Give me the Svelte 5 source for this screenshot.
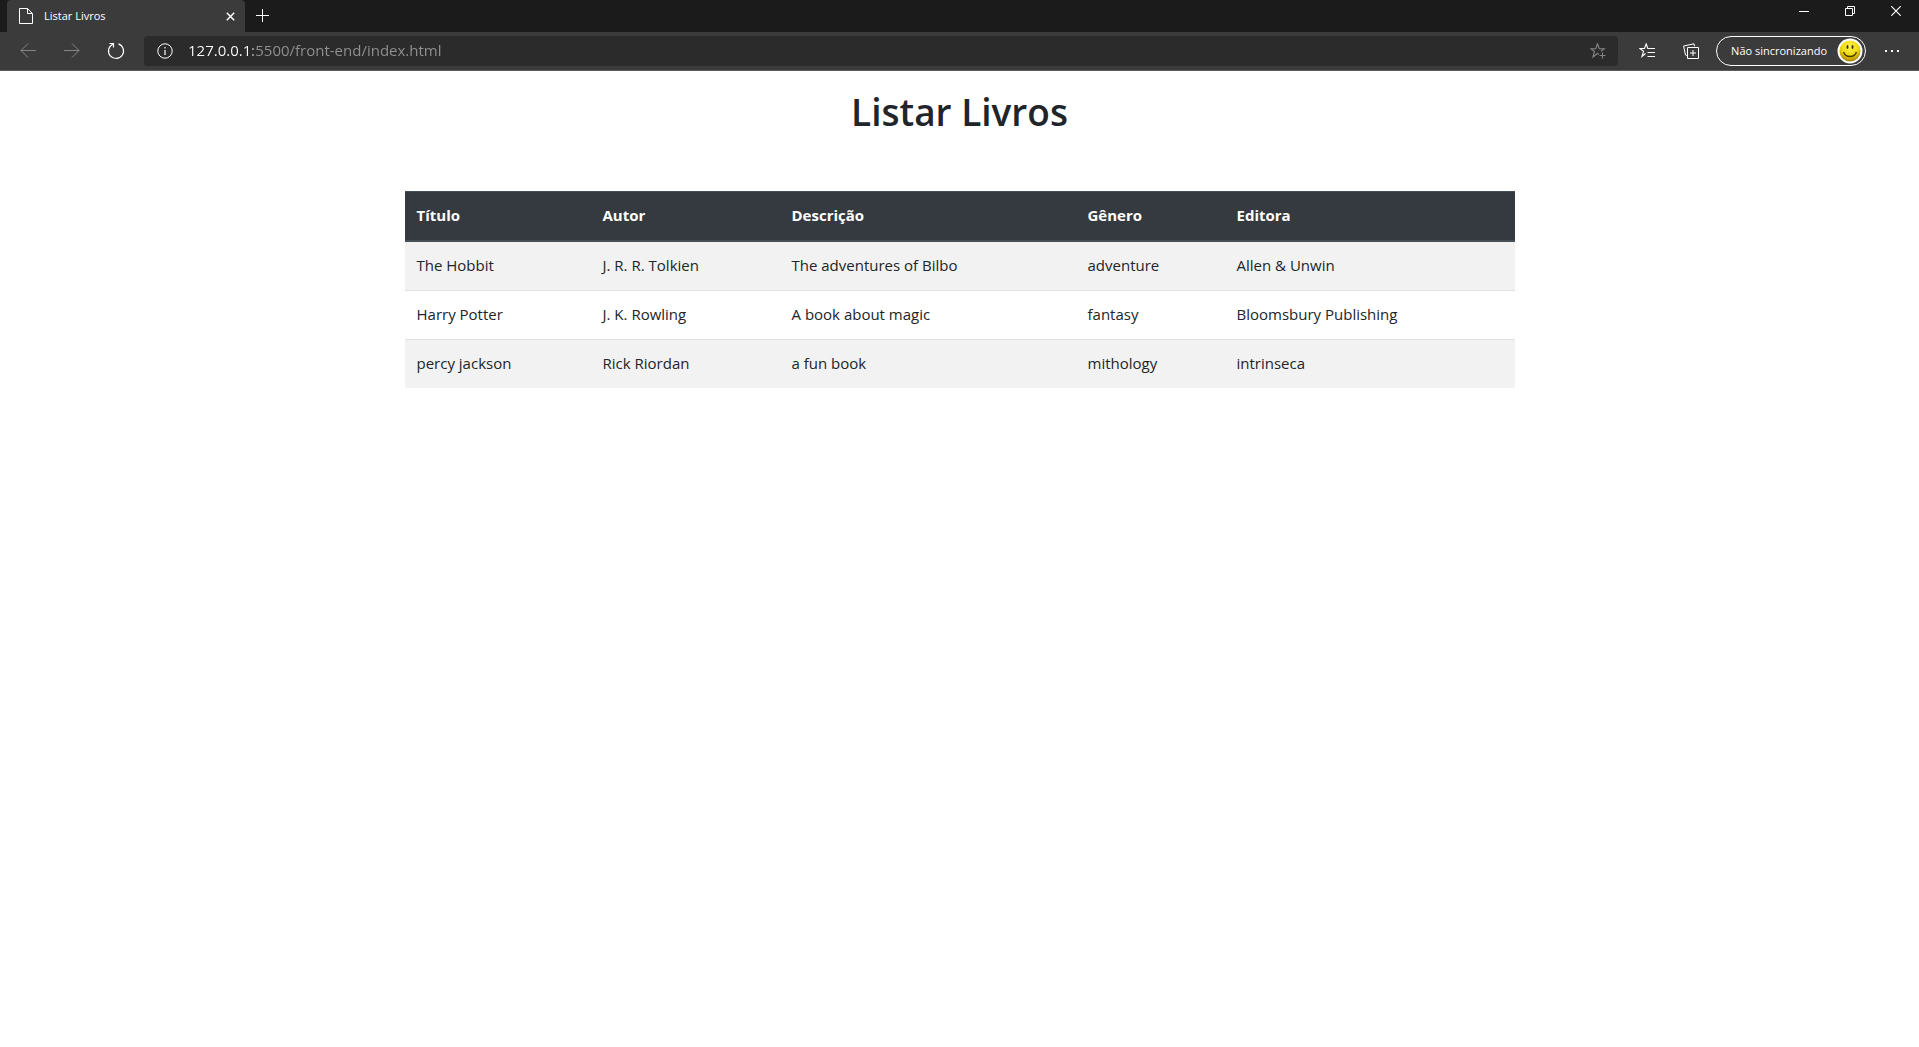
<script>
  const columns = ['Título', 'Autor', 'Descrição', 'Gênero', 'Editora'];
  const books = [
    ['The Hobbit', 'J. R. R. Tolkien', 'The adventures of Bilbo', 'adventure', 'Allen & Unwin'],
    ['Harry Potter', 'J. K. Rowling', 'A book about magic', 'fantasy', 'Bloomsbury Publishing'],
    ['percy jackson', 'Rick Riordan', 'a fun book', 'mithology', 'intrinseca'],
  ];
  let url = $state('127.0.0.1:5500/front-end/index.html');
</script>

<div class="browser">
  <header>
    <div class="tabstrip">
      <div class="tab">
        <svg width="14" height="16" viewBox="0 0 14 16"><path d="M.5.5h8l5 5v10H.5zM8.500.5v5h5" /></svg>
        <span class="tab-title">Listar Livros</span>
        <button class="tab-close" aria-label="Fechar guia">
          <svg width="9" height="9" viewBox="0 0 9 9"><path d="M.8.8l7.4 7.4M8.2.8L.8 8.2" stroke-width="1.5" /></svg>
        </button>
      </div>
      <button class="new-tab" aria-label="Nova guia">
        <svg width="13" height="13" viewBox="0 0 13 13"><path d="M6.5 0v13M0 6.5h13" /></svg>
      </button>
      <div class="window-buttons">
        <button aria-label="Minimizar">
          <svg width="10" height="10" viewBox="0 0 10 10"><path d="M0 5.5h10" /></svg>
        </button>
        <button aria-label="Restaurar">
          <svg width="10" height="10" viewBox="0 0 10 10"><path d="M.5 2.5h7v7h-7zM2.5 2.5v-2h7v7h-2" /></svg>
        </button>
        <button aria-label="Fechar">
          <svg width="10" height="10" viewBox="0 0 10 10"><path d="M.3.3l9.4 9.4M9.7.3L.3 9.7" stroke-width="1.2" /></svg>
        </button>
      </div>
    </div>

    <div class="toolbar">
      <button class="tool dim" aria-label="Voltar">
        <svg width="16" height="16" viewBox="0 0 16 16"><path d="M16 7.500H.8M8 .5l-7 7 7 7" /></svg>
      </button>
      <button class="tool dim" aria-label="Avançar">
        <svg width="16" height="16" viewBox="0 0 16 16"><path d="M0 7.500h15.200M8 .5l7 7-7 7" /></svg>
      </button>
      <button class="tool" aria-label="Atualizar">
        <svg width="18" height="18" viewBox="0 0 18 18"><path d="M11.500 1.900A7.500 7.500 0 1 1 5.800 2.200M2.500 1.500h4V5.500" stroke-width="1.2" /></svg>
      </button>
      <div class="address">
        <button class="in-address" aria-label="Informações do site">
          <svg width="16" height="16" viewBox="0 0 16 16"><circle cx="8" cy="8" r="7.200" /><path d="M8 7v5M8 4v1.500" stroke-width="1.2" /></svg>
        </button>
        <input type="text" aria-label="Endereço" bind:value={url} />
        <button class="in-address dim" aria-label="Adicionar aos favoritos">
          <svg width="16" height="16" viewBox="0 0 16 16"><path d="M9 11.300L7.500 10.500 3 14l1.500-5.500L.8 5.700h4.900L7.500.8l1.800 4.900h4.900L11 8.200M12.500 9.500v6M9.500 12.500h6" stroke-width="1.1" /></svg>
        </button>
      </div>
      <button class="tool" aria-label="Favoritos">
        <svg width="16" height="16" viewBox="0 0 16 16"><path d="M6.500 10.500L3 13.500l1.500-5.200L.8 5.500h4.700L7.200.8l1.600 4.700H16M8.500 9.500H16M8.500 13.500H16" stroke-width="1.1" /></svg>
      </button>
      <button class="tool" aria-label="Coleções">
        <svg width="16" height="16" viewBox="0 0 16 16"><path d="M4.500 4.500h11v11h-11zM10 7v6M7 10h6M3.800 12.500L2.500 12 .6 3 11 .8l.6 2.500" /></svg>
      </button>
      <button class="profile">
        <span>Não sincronizando</span>
        <svg width="26" height="26" viewBox="0 0 26 26">
          <defs>
            <radialGradient id="face" cx=".5" cy=".3" r=".7">
              <stop offset="0" stop-color="#fff45a" /><stop offset=".6" stop-color="#ecd808" /><stop offset="1" stop-color="#a98000" />
            </radialGradient>
          </defs>
          <circle cx="13" cy="13" r="12.500" fill="#fff" stroke="none" />
          <circle cx="13" cy="13" r="10.500" fill="url(#face)" stroke="none" />
          <ellipse cx="10.500" cy="9" rx="1" ry="2" fill="#3a2c00" stroke="none" />
          <ellipse cx="15.500" cy="9" rx="1" ry="2" fill="#3a2c00" stroke="none" />
          <path d="M6.500 14c2 6 11 6 13 0" stroke="#4b3800" stroke-width="1.400" />
        </svg>
      </button>
      <button class="tool" aria-label="Configurações e mais">
        <svg width="16" height="4" viewBox="0 0 16 4"><path d="M1 2h2M7 2h2M13 2h2" stroke-width="2" /></svg>
      </button>
    </div>
  </header>

  <main>
    <h1>Listar Livros</h1>
    <table>
      <thead>
        <tr>
          {#each columns as column}
            <th scope="col">{column}</th>
          {/each}
        </tr>
      </thead>
      <tbody>
        {#each books as book}
          <tr>
            {#each book as value}
              <td>{value}</td>
            {/each}
          </tr>
        {/each}
      </tbody>
    </table>
  </main>
</div>

<style>
  :global(body) {
    margin: 0;
    background: #fff;
  }
  .browser {
    font-family: 'Segoe UI', 'Open Sans', 'Noto Sans', sans-serif;
    color: #212529;
  }
  button {
    display: flex;
    align-items: center;
    justify-content: center;
    padding: 0;
    border: 0;
    background: none;
    color: #fff;
    font: inherit;
  }
  svg {
    display: block;
    flex: none;
    fill: none;
    stroke: currentColor;
  }
  header {
    background: #3b3b3b;
    border-bottom: 1px solid #5c5c5c;
    color: #fff;
  }
  .tabstrip {
    display: flex;
    height: 32px;
    padding-left: 7px;
    background: #1b1b1b;
  }
  .tab {
    display: flex;
    align-items: center;
    box-sizing: border-box;
    width: 238px;
    padding: 0 10px 0 12px;
    border-radius: 4px 4px 0 0;
    background: #3b3b3b;
  }
  .tab-title {
    flex: 1;
    margin-left: 11px;
    padding-bottom: 2px;
    font-size: 11px;
  }
  .new-tab {
    width: 35px;
    height: 31px;
  }
  .window-buttons {
    display: flex;
    height: 22px;
    margin-left: auto;
  }
  .window-buttons button {
    width: 46px;
  }
  .toolbar {
    display: flex;
    align-items: center;
    height: 38px;
    padding: 0 5px 0 6px;
  }
  .tool {
    width: 44px;
    height: 30px;
  }
  .dim {
    color: #858585;
  }
  .address {
    display: flex;
    flex: 1;
    align-items: center;
    height: 30px;
    margin: 0 7px 0 6px;
    border-radius: 4px;
    background: #2b2b2b;
  }
  .in-address {
    width: 40px;
    height: 30px;
  }
  .in-address:first-child {
    margin-left: 1px;
  }
  input {
    flex: 1;
    min-width: 0;
    height: 24px;
    margin: 0 0 2px 3px;
    padding: 0;
    border: 0;
    outline: 0;
    font-family: inherit;
    font-size: 15px;
    /* host in white, port and path in grey */
    color: transparent;
    background: linear-gradient(90deg, #fff 65px, #929292 65px);
    background-clip: text;
  }
  .profile {
    gap: 10px;
    box-sizing: border-box;
    height: 30px;
    margin: 0 4px 0 3px;
    padding: 0 2px 0 14px;
    border: 1px solid #fff;
    border-radius: 15px;
    font-size: 11px;
  }
  .profile span {
    padding-bottom: 2px;
  }
  main {
    max-width: 1110px;
    margin: 0 auto;
    padding: 17px 15px;
  }
  h1 {
    margin: 0 0 55px;
    font-size: 37px;
    font-weight: 600;
    line-height: 48px;
    text-align: center;
  }
  table {
    width: 100%;
    table-layout: fixed;
    border-spacing: 0;
    font-size: 15px;
    line-height: 24px;
    text-align: left;
  }
  th,
  td {
    padding: 11px 12px 13px;
  }
  th {
    border-top: 1px solid #454d55;
    border-bottom: 2px solid #454d55;
    background: #343a40;
    color: #fff;
    font-weight: 700;
  }
  th:nth-child(1) {
    width: 162px;
  }
  th:nth-child(2) {
    width: 165px;
  }
  th:nth-child(3) {
    width: 272px;
  }
  th:nth-child(4) {
    width: 125px;
  }
  tbody tr:nth-child(odd) {
    background: #f2f2f2;
  }
  tbody tr + tr td {
    border-top: 1px solid #dee2e6;
  }
</style>
